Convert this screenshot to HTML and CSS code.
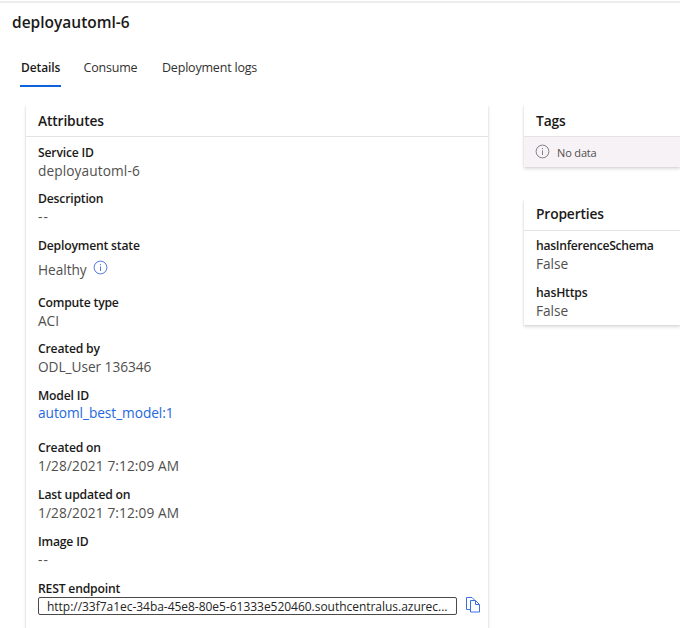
FILE: index.html
```html
<!DOCTYPE html>
<html lang="en">
<head>
<meta charset="utf-8">
<title>deployautoml-6</title>
<link rel="stylesheet" href="styles.css">
</head>
<body>
<h1 class="title">deployautoml-6</h1>
<nav class="tabs">
  <a class="tab tab-active">Details</a>
  <a class="tab tab-consume">Consume</a>
  <a class="tab tab-logs">Deployment logs</a>
</nav>
<main class="columns">
  <section class="card attributes">
    <h2 class="card-title">Attributes</h2>
    <dl class="list">
      <div class="item"><dt>Service ID</dt><dd class="name">deployautoml-6</dd></div>
      <div class="item"><dt>Description</dt><dd class="dashes">--</dd></div>
      <div class="item item-state"><dt>Deployment state</dt><dd><span>Healthy</span><svg class="info" viewBox="0 0 15 15"><circle cx="7.5" cy="7.5" r="6.4"/><path d="M7.5 6.4v4.6M7.5 4v1.2"/></svg></dd></div>
      <div class="item"><dt>Compute type</dt><dd>ACI</dd></div>
      <div class="item"><dt>Created by</dt><dd>ODL_User 136346</dd></div>
      <div class="item item-model"><dt>Model ID</dt><dd><a class="link">automl_best_model:1</a></dd></div>
      <div class="item"><dt>Created on</dt><dd class="date">1/28/2021 7:12:09 AM</dd></div>
      <div class="item"><dt>Last updated on</dt><dd class="date">1/28/2021 7:12:09 AM</dd></div>
      <div class="item"><dt>Image ID</dt><dd class="dashes">--</dd></div>
      <div class="item"><dt>REST endpoint</dt><dd class="endpoint"><span class="field">http://33f7a1ec-34ba-45e8-80e5-61333e520460.southcentralus.azurec...</span><svg class="copy" viewBox="0 0 14 16"><path d="M4.500 12.500h-4V.500h5.500l2.500 2.500M4.500 3.500h5l4 4v7.500h-9zM9.500 3.500v4h4"/></svg></dd></div>
    </dl>
  </section>
  <div class="side">
    <section class="card">
      <h2 class="card-title">Tags</h2>
      <div class="empty"><svg class="info info-gray" viewBox="0 0 15 15"><circle cx="7.5" cy="7.5" r="6.4"/><path d="M7.5 6.4v4.6M7.5 4v1.2"/></svg><span>No data</span></div>
    </section>
    <section class="card properties">
      <h2 class="card-title">Properties</h2>
      <dl class="list">
        <div class="item"><dt class="schema">hasInferenceSchema</dt><dd>False</dd></div>
        <div class="item"><dt>hasHttps</dt><dd>False</dd></div>
      </dl>
    </section>
  </div>
</main>
</body>
</html>
```
FILE: styles.css
```css
* { box-sizing: border-box; }
html { overflow: hidden; }
body {
  margin: 0;
  height: 628px;
  overflow: hidden;
  padding-top: 1px;
  background: #fff;
  color: #1b1a19;
  font-family: "Open Sans", "Noto Sans", sans-serif;
}
.title {
  margin: 0;
  padding: 8px 12px 0;
  height: 47px;
  border-top: 2px solid #ececec;
  font-size: 15.5px;
  line-height: 22px;
  font-weight: 600;
}
.tabs { display: flex; height: 39px; padding-left: 20px; }
.tab {
  height: 39px;
  line-height: 39px;
  padding: 0 1px;
  font-size: 12.5px;
  letter-spacing: -.2px;
  color: #323130;
  white-space: nowrap;
}
.tab-active { width: 41px; font-size: 12px; letter-spacing: -.1px; font-weight: 600; color: #1b1a19; border-bottom: 2px solid #0f62dc; }
.tab-consume { margin-left: 22px; width: 56px; padding-left: 0.5px; }
.tab-logs { margin-left: 22px; }
.columns { display: flex; align-items: flex-start; gap: 36px; padding: 18px 0 0 26px; }
.card { background: #fff; box-shadow: 0 2px 3px rgba(60, 40, 50, .17), 0 0 2px rgba(60, 40, 50, .1); clip-path: inset(0 -5px -6px -5px); }
.attributes { width: 462px; height: 540px; flex: none; }
.side { flex: 1; }
.card-title {
  margin: 0;
  height: 32px;
  padding: 5px 12px 0;
  border-bottom: 1px solid #e3e3e3;
  font-size: 13.8px;
  letter-spacing: -.15px;
  line-height: 22px;
  font-weight: 600;
}
.list { margin: 0; padding: 6.5px 12px 0; }
.item { height: 46.75px; }
.item-state { height: 56.6px; }
.item-state dd { display: flex; padding-top: 6px; }
.item-model { height: 52.2px; }
.item-model dd { margin-top: -1.6px; }
dt { font-size: 12.2px; letter-spacing: -.2px; line-height: 18.6px; font-weight: 600; white-space: nowrap; }
.schema { letter-spacing: -.3px; }
dd { margin: -.6px 0 0; font-size: 13.7px; letter-spacing: -.05px; line-height: 18px; color: #514f4d; white-space: nowrap; }
.name { letter-spacing: .1px; }
.date { letter-spacing: .1px; }
.dashes { letter-spacing: 1px; }
.link { color: #2468e0; }
.info { width: 15px; height: 15px; margin: -1px 0 0 6px; fill: none; stroke: #5579e0; stroke-width: 1; }
.info-gray { margin: -2px 7px 0 0; stroke: #85808a; }
.endpoint { display: flex; align-items: center; margin-top: -1.2px; }
.field {
  flex: none;
  width: 419px;
  height: 18px;
  padding: 0 0 0 8px;
  border: 1px solid #4c4a48;
  border-radius: 2px;
  font-size: 12px;
  letter-spacing: -.03px;
  line-height: 17px;
  color: #252423;
  overflow: hidden;
}
.copy { flex: none; width: 14px; height: 16px; margin: -1px 0 0 9px; fill: none; stroke: #3b70e2; }
.empty { display: flex; align-items: center; height: 30px; padding-left: 11px; background: #f7f2f6; font-size: 11px; letter-spacing: -.15px; color: #514f4d; }
.properties { margin-top: 32px; height: 126px; }
.properties .card-title { padding-top: 4px; }
.properties .list { padding-top: 6px; }
```
